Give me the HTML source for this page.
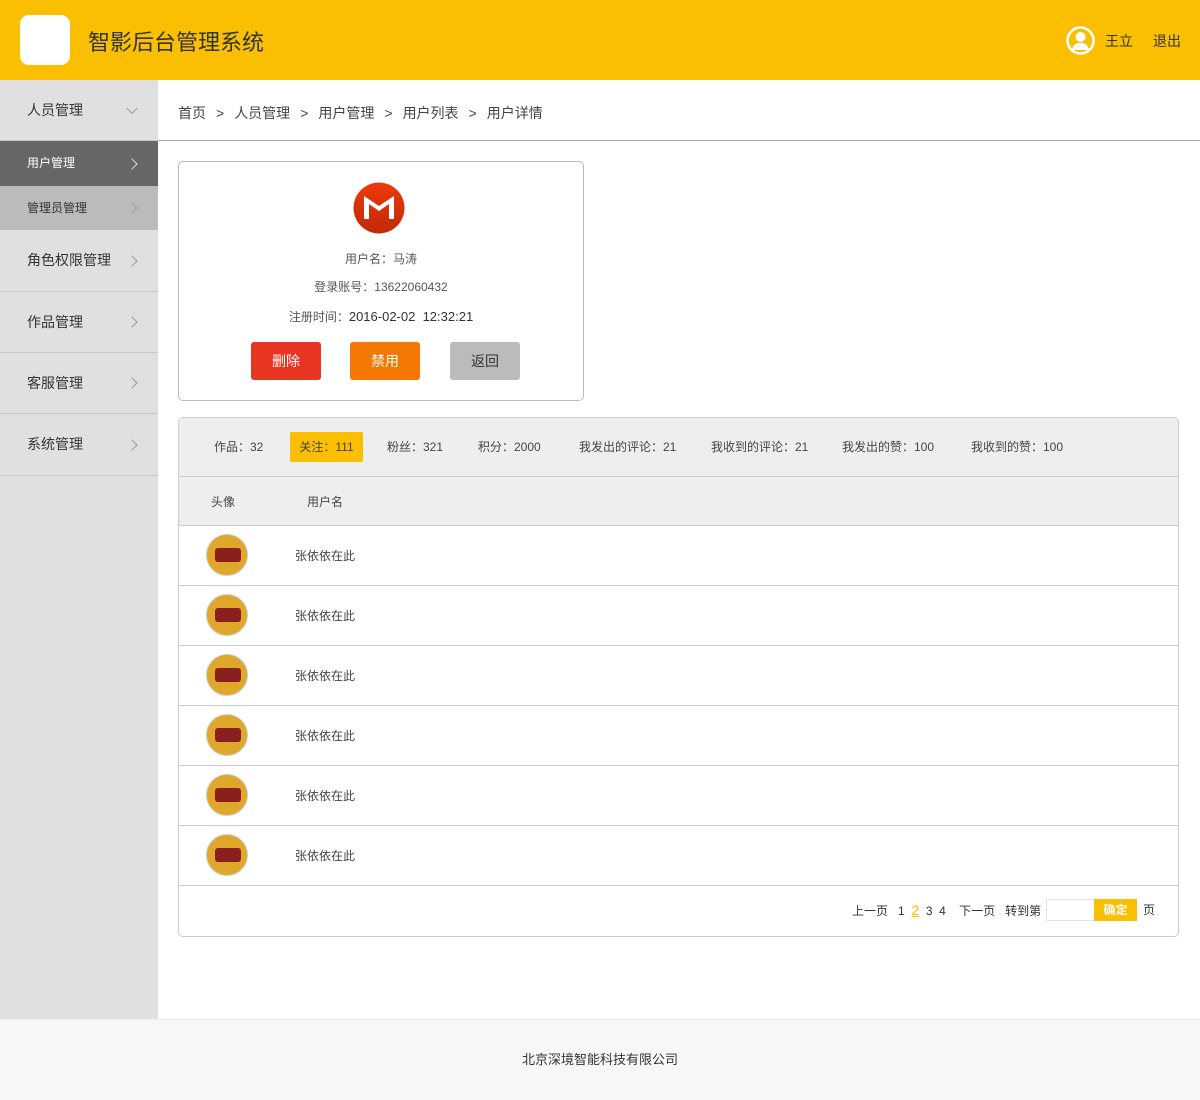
<!DOCTYPE html>
<html><head><meta charset="utf-8"><style>
*{margin:0;padding:0;box-sizing:border-box}
body{width:1200px;height:1100px;font-family:"Liberation Sans","Noto Sans CJK SC",sans-serif;color:#333;position:relative;background:#fff;overflow:hidden}
.abs{position:absolute}
.hdr{left:0;top:0;width:1200px;height:80px;background:#f9bf00}
.logo{left:20px;top:15px;width:50px;height:50px;background:#fff;border-radius:9px}
.title{left:88px;top:25px;font-size:22px;color:#333}
.side{left:0;top:80px;width:158px;height:939px;background:#e0e0e0}
.si{position:absolute;left:0;width:158px;border-bottom:1px solid #c8c8c8;font-size:14px;color:#333;padding-left:27px}
.si .ar{position:absolute;right:22px;top:50%;width:8px;height:8px;border-right:1px solid #999;border-top:1px solid #999;transform:translateY(-50%) rotate(45deg)}
.bc{left:178px;top:103px;font-size:14px;color:#444;word-spacing:0}
.bc span{margin:0 10px}
.card{left:178px;top:161px;width:406px;height:240px;border:1px solid #bbb;border-radius:5px;text-align:center;font-size:12px;color:#555}
.btn{position:absolute;top:180px;width:70px;height:38px;border-radius:3px;color:#fff;font-size:14px;line-height:38px;text-align:center}
.tbl{left:178px;top:417px;width:1001px;height:520px;border:1px solid #ccc;border-radius:5px;overflow:hidden}
.row{position:absolute;left:0;width:1000px;height:60px;border-top:1px solid #ccc;font-size:12px;color:#444}
.av{position:absolute;left:27px;top:8px;width:42px;height:42px;border-radius:50%;background:#e0a82a;border:1px solid #ccc}
.av:after{content:"";position:absolute;left:8px;top:13px;width:26px;height:14px;background:#8a1f1f;border-radius:3px}
.ft{left:0;top:1019px;width:1200px;height:81px;background:#f7f7f7;border-top:1px solid #eee;text-align:center;font-size:13px;line-height:80px;color:#333}
</style></head><body>
<div class="abs hdr"></div>
<div class="abs logo"></div>
<div class="abs title">智影后台管理系统</div>
<svg class="abs" style="left:1066px;top:26px" width="29" height="29" viewBox="0 0 29 29"><circle cx="14.5" cy="14.5" r="13" fill="none" stroke="#fff" stroke-width="2.5"/><circle cx="14.5" cy="11" r="5" fill="#fff"/><path d="M6 24 Q8 16 14.5 17 Q21 16 23 24 Z" fill="#fff"/></svg>
<div class="abs" style="left:1105px;top:31px;font-size:14px;color:#333">王立</div>
<div class="abs" style="left:1153px;top:31px;font-size:14px;color:#333">退出</div>

<div class="abs side">
<div class="si" style="top:0;height:61px;line-height:60px">人员管理<i class="ar" style="transform:translateY(-70%) rotate(135deg)"></i></div>
<div class="si" style="top:61px;height:45px;line-height:45px;background:#666;color:#fff;font-size:12px;border:none">用户管理<i class="ar" style="border-color:#ddd"></i></div>
<div class="si" style="top:106px;height:44px;line-height:44px;background:#bbb;font-size:12px;border:none">管理员管理<i class="ar"></i></div>
<div class="si" style="top:150px;height:62px;line-height:61px">角色权限管理<i class="ar"></i></div>
<div class="si" style="top:212px;height:61px;line-height:60px">作品管理<i class="ar"></i></div>
<div class="si" style="top:273px;height:61px;line-height:60px">客服管理<i class="ar"></i></div>
<div class="si" style="top:334px;height:62px;line-height:61px">系统管理<i class="ar"></i></div>
</div>

<div class="abs bc">首页<span>&gt;</span>人员管理<span>&gt;</span>用户管理<span>&gt;</span>用户列表<span>&gt;</span>用户详情</div>
<div class="abs" style="left:158px;top:140px;width:1042px;height:1px;background:#aaa"></div>

<div class="abs card">
<svg style="position:absolute;left:174px;top:20px" width="52" height="52" viewBox="0 0 52 52"><defs><linearGradient id="g" x1="0" y1="0" x2="0" y2="1"><stop offset="0" stop-color="#ec3a0c"/><stop offset="1" stop-color="#c02a06"/></linearGradient></defs><circle cx="26" cy="26" r="25.5" fill="url(#g)"/><path d="M11 37 V14 L26 24 L41 14 V37 H36 V22 L26 29 L16 22 V37 Z" fill="#fff"/></svg>
<div style="position:absolute;left:0;width:404px;top:88px">用户名：马涛</div>
<div style="position:absolute;left:0;width:404px;top:116px">登录账号：13622060432</div>
<div style="position:absolute;left:0;width:404px;top:146px"><span>注册时间：</span><span style="color:#333;font-size:13px">2016-02-02&nbsp; 12:32:21</span></div>
<div class="btn" style="left:72px;background:#e83623">删除</div>
<div class="btn" style="left:171px;background:#f57804">禁用</div>
<div class="btn" style="left:271px;background:#bbb;color:#333">返回</div>
</div>

<div class="abs tbl">
<div style="position:absolute;left:0;top:0;width:1000px;height:108px;background:#eee"></div>
<div style="position:absolute;left:0;top:58px;width:1000px;height:1px;background:#ccc"></div>
<div style="position:absolute;top:14px;left:0;font-size:12px;color:#444;height:30px;line-height:30px;width:1000px">
<span style="position:absolute;left:35px">作品：32</span>
<span style="position:absolute;left:111px;width:73px;background:#f9bf00;border-radius:2px;text-align:center">关注：111</span>
<span style="position:absolute;left:208px">粉丝：321</span>
<span style="position:absolute;left:299px">积分：2000</span>
<span style="position:absolute;left:400px">我发出的评论：21</span>
<span style="position:absolute;left:532px">我收到的评论：21</span>
<span style="position:absolute;left:663px">我发出的赞：100</span>
<span style="position:absolute;left:792px">我收到的赞：100</span>
</div>
<div style="position:absolute;top:75px;left:32px;font-size:12px;color:#444">头像</div>
<div style="position:absolute;top:75px;left:128px;font-size:12px;color:#444">用户名</div>
<div class="row" style="top:107px"><div class="av"></div><div style="position:absolute;left:116px;top:21px">张依依在此</div></div>
<div class="row" style="top:167px"><div class="av"></div><div style="position:absolute;left:116px;top:21px">张依依在此</div></div>
<div class="row" style="top:227px"><div class="av"></div><div style="position:absolute;left:116px;top:21px">张依依在此</div></div>
<div class="row" style="top:287px"><div class="av"></div><div style="position:absolute;left:116px;top:21px">张依依在此</div></div>
<div class="row" style="top:347px"><div class="av"></div><div style="position:absolute;left:116px;top:21px">张依依在此</div></div>
<div class="row" style="top:407px"><div class="av"></div><div style="position:absolute;left:116px;top:21px">张依依在此</div></div>
<div class="row" style="top:467px;border-top:1px solid #ccc"></div>
<div style="position:absolute;top:482px;left:673px;font-size:12px;color:#333;line-height:20px;white-space:nowrap">上一页&nbsp;&nbsp; 1&nbsp;&nbsp;<span style="color:#f9bf00;text-decoration:underline;font-size:14px">2</span>&nbsp;&nbsp;3&nbsp;&nbsp;4&nbsp;&nbsp;&nbsp; 下一页&nbsp;&nbsp; 转到第</div>
<div style="position:absolute;top:481px;left:867px;width:49px;height:22px;border:1px solid #e3e3e3;background:#fff"></div>
<div style="position:absolute;top:481px;left:915px;width:43px;height:22px;background:#f9bf00;color:#fff;font-size:12px;font-weight:bold;text-align:center;line-height:22px">确定</div>
<div style="position:absolute;top:482px;left:964px;font-size:12px;line-height:20px">页</div>
</div>

<div class="abs ft">北京深境智能科技有限公司</div>
</body></html>
